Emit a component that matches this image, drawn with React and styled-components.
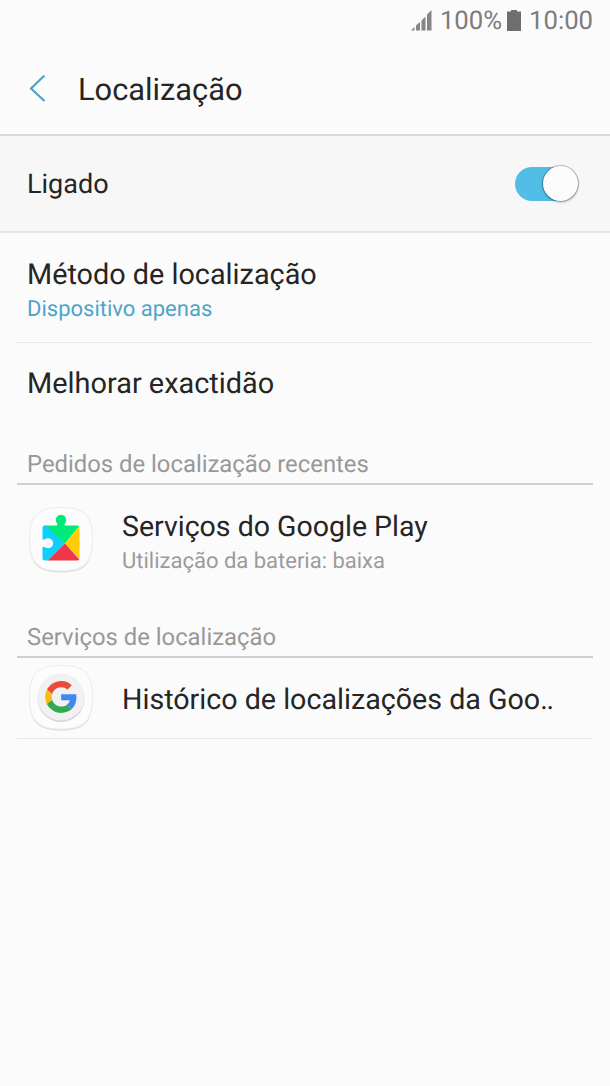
import React, { useState } from 'react'
import styled, { createGlobalStyle } from 'styled-components'

const GlobalStyle = createGlobalStyle`
  * {
    box-sizing: border-box;
  }
  body {
    margin: 0;
    background: #fbfbfb;
    font-family: Roboto, "Liberation Sans", sans-serif;
    color: #252525;
    text-rendering: geometricPrecision;
  }
`

const Screen = styled.div`
  width: 610px;
  height: 1086px;
  overflow: hidden;
  background: #fbfbfb;
`

const StatusBar = styled.div`
  display: flex;
  align-items: center;
  justify-content: flex-end;
  height: 40px;
  padding: 1px 17px 0 0;
  font-size: 25.7px;
  line-height: 39px;
  color: #7c7c7c;
`

const StatusText = styled.span`
  padding-top: 2px;
`

const SignalIcon = styled.svg`
  width: 21px;
  height: 21px;
  margin: 0 8px 1px 0;
`

const BatteryIcon = styled.svg`
  width: 14px;
  height: 21px;
  margin: 0 8px 1px 5px;
`

const Header = styled.header`
  display: flex;
  align-items: center;
  height: 96px;
  padding: 6px 0 0 29px;
  border-bottom: 2px solid #d9d9d9;
`

const BackIcon = styled.svg`
  width: 18px;
  height: 28px;
  margin: 0 31px 4px 0;
`

const Title = styled.h1`
  margin: 0;
  font-size: 30.8px;
  font-weight: 400;
  line-height: 40px;
`

const SwitchRow = styled.div`
  display: flex;
  align-items: center;
  justify-content: space-between;
  height: 97px;
  padding: 0 32px 0 27px;
  background: #f7f7f7;
  border-bottom: 2px solid #e5e5e5;
`

const Track = styled.button`
  display: flex;
  align-items: center;
  justify-content: ${props => props.$on ? 'flex-end' : 'flex-start'};
  width: 63px;
  height: 34px;
  padding: 0;
  border: none;
  border-radius: 17px;
  background: ${props => props.$on ? '#52bee5' : '#bdbdbd'};
`

const Knob = styled.span`
  flex: none;
  width: 35px;
  height: 35px;
  border-radius: 50%;
  background: #fcfcfc;
  box-shadow: 0 0 0 1px rgba(0, 0, 0, 0.22), 0 1px 3px rgba(0, 0, 0, 0.3);
`

const List = styled.div`
  padding: 0 17px;
`

const Row = styled.div`
  display: flex;
  align-items: center;
  height: ${props => props.$height}px;
  padding-left: 10px;
  border-bottom: ${props => props.$divider ? '1px solid #e6e6e6' : 'none'};
`

const RowText = styled.div`
  padding-top: ${props => props.$top}px;
`

const AppIcon = styled.svg`
  flex: none;
  width: 68px;
  height: 70px;
  margin-right: 27px;
`

const Label = styled.div`
  font-size: ${props => props.$size || 28.8}px;
  line-height: 36px;
  white-space: nowrap;
`

const Dots = styled.span`
  letter-spacing: -1.3px;
`

const Detail = styled.div`
  font-size: 22px;
  line-height: 34px;
  white-space: nowrap;
  color: ${props => props.$accent ? '#4ba5c7' : '#9b9b9b'};
`

const SectionTitle = styled.h2`
  height: ${props => props.$height}px;
  margin: 0;
  padding: ${props => props.$height - 38}px 0 0 10px;
  border-bottom: 2px solid #d0d0d0;
  font-size: 23.85px;
  font-weight: 400;
  line-height: 34px;
  color: #989898;
`

const Tile = () => (
  <>
    <path d="M34 3.500C58 3.500 65.500 11 65.500 35S58 67.500 34 67.500 2.500 59 2.500 35 10 3.500 34 3.500Z" fill="#dcdcdc" />
    <path d="M34 2.500C57 2.500 65.500 10 65.500 34S57 66 34 66 2.500 58 2.500 34 11 2.500 34 2.500Z" fill="#fcfcfc" stroke="#ececec" />
  </>
)

const PlayServicesIcon = () => (
  <AppIcon viewBox="0 0 68 70">
    <Tile />
    <clipPath id="puzzle">
      <path d="M18 20.500H30.300V18.700A5.200 5.200 0 1 1 37.700 18.700V20.500H50Q52.500 20.500 52.500 23V53Q52.500 55.500 50 55.500H18Q15.500 55.500 15.500 53V42H17.800A5 5 0 1 0 17.800 34.500H15.500V23Q15.500 20.500 18 20.500Z" />
    </clipPath>
    <g clipPath="url(#puzzle)">
      <path d="M14 19V5H54V19L38 38.500Z" fill="#00ea78" />
      <path d="M17 19L38 38.500 20 57H10V19Z" fill="#10cffb" />
      <path d="M55 18L38 38.500 55 57Z" fill="#ffcc07" />
      <path d="M19 57.500L38 38.500 55 57.500Z" fill="#f0374a" />
    </g>
  </AppIcon>
)

const GoogleIcon = () => (
  <AppIcon viewBox="0 0 68 70">
    <Tile />
    <circle cx="34" cy="35.500" r="23.500" fill="#d3d3d3" />
    <circle cx="34" cy="34" r="23.500" fill="#f1f1f1" />
    <g transform="translate(18.200 18) scale(0.665)">
      <path fill="#e94b3c" d="M24 9.500c3.540 0 6.710 1.220 9.210 3.600l6.850-6.850C35.900 2.380 30.470 0 24 0 14.620 0 6.510 5.380 2.560 13.220l7.980 6.190C12.430 13.720 17.740 9.500 24 9.500z" />
      <path fill="#4285f4" d="M46.980 24.550c0-1.570-.15-3.090-.38-4.550H24v9.020h12.940c-.58 2.960-2.260 5.480-4.780 7.180l7.730 6c4.510-4.180 7.090-10.360 7.090-17.650z" />
      <path fill="#fbbc12" d="M10.530 28.590c-.48-1.450-.76-2.990-.76-4.590s.27-3.140.76-4.590l-7.980-6.190C.92 16.460 0 20.120 0 24s.92 7.540 2.560 10.780l7.970-6.190z" />
      <path fill="#34a853" d="M24 48c6.480 0 11.930-2.130 15.890-5.810l-7.730-6c-2.150 1.450-4.920 2.300-8.160 2.300-6.260 0-11.570-4.220-13.470-9.910l-7.980 6.190C6.510 42.620 14.620 48 24 48z" />
    </g>
  </AppIcon>
)

function App() {
  const [enabled, setEnabled] = useState(true)

  return (
    <>
      <GlobalStyle />
      <Screen>
        <StatusBar>
          <SignalIcon viewBox="0 0 21 21" fill="#858585">
            <path d="M0 20.500L3.500 17V20.500ZM5 15.500L9 12V20.500H5ZM10.500 10.500L14.500 6.500V20.500H10.500ZM16 4.500L20.500 0V20.500H16Z" />
          </SignalIcon>
          <StatusText>100%</StatusText>
          <BatteryIcon viewBox="0 0 14 21" fill="#6e6e6e">
            <path d="M4 0H10V1.500H14V21H0V1.500H4Z" />
          </BatteryIcon>
          <StatusText>10:00</StatusText>
        </StatusBar>
        <Header>
          <BackIcon viewBox="0 0 18 28" fill="none" stroke="#4ba5c7" strokeWidth="2.2">
            <path d="M15.500 1.500L2 14.500L15.500 27" />
          </BackIcon>
          <Title>Localização</Title>
        </Header>
        <SwitchRow>
          <Label $size={27}>Ligado</Label>
          <Track $on={enabled} onClick={() => setEnabled(!enabled)} aria-label="Ligado">
            <Knob />
          </Track>
        </SwitchRow>
        <List>
          <Row $height={110} $divider>
            <RowText $top={8}>
              <Label>Método de localização</Label>
              <Detail $accent>Dispositivo apenas</Detail>
            </RowText>
          </Row>
          <Row $height={80}>
            <RowText $top={1}>
              <Label $size={28.9}>Melhorar exactidão</Label>
            </RowText>
          </Row>
          <SectionTitle $height={62}>Pedidos de localização recentes</SectionTitle>
          <Row $height={110}>
            <PlayServicesIcon />
            <RowText $top={7}>
              <Label $size={28.5}>Serviços do Google Play</Label>
              <Detail>Utilização da bateria: baixa</Detail>
            </RowText>
          </Row>
          <SectionTitle $height={63}>Serviços de localização</SectionTitle>
          <Row $height={81} $divider>
            <GoogleIcon />
            <RowText $top={2}>
              <Label $size={28.65}>Histórico de localizações da Goo<Dots>..</Dots></Label>
            </RowText>
          </Row>
        </List>
      </Screen>
    </>
  )
}

export default App
